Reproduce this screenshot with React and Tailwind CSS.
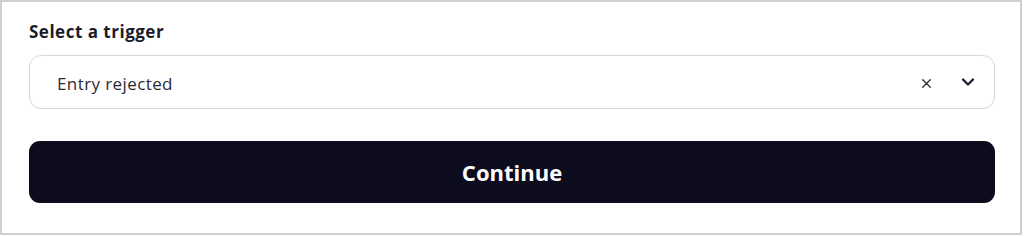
import { X, ChevronDown } from 'lucide-react';

export default function App() {
  return (
    <div className="h-[236px] w-[1024px] bg-white font-['Open_Sans','Noto_Sans',sans-serif]">
      <div className="h-[235px] w-[1022px] border-2 border-[#cfcfcf] pl-[27px] pr-[25px] pt-[19px]">
        <label className="block text-[17px] font-bold leading-[22px] tracking-[0.5px] text-[#1c1b29]">Select a trigger</label>
        <div className="mt-[12px] flex h-[54px] items-center rounded-[12px] border border-[#d8d8dc] pl-[27px] pr-[16px]">
          <span className="flex-1 pt-[3px] text-[17px] tracking-[0.4px] text-[#2b2a35]">Entry rejected</span>
          <button className="mr-[24px] pt-[2px] text-[#2b2a35]">
            <X size={15} strokeWidth={2} />
          </button>
          <ChevronDown size={20} strokeWidth={2.75} className="text-[#1c1b29]" />
        </div>
        <button className="mt-[32px] flex h-[62px] w-full items-center justify-center rounded-[11px] bg-[#0d0b1e] text-[22px] font-bold text-white">
          Continue
        </button>
      </div>
    </div>
  );
}
